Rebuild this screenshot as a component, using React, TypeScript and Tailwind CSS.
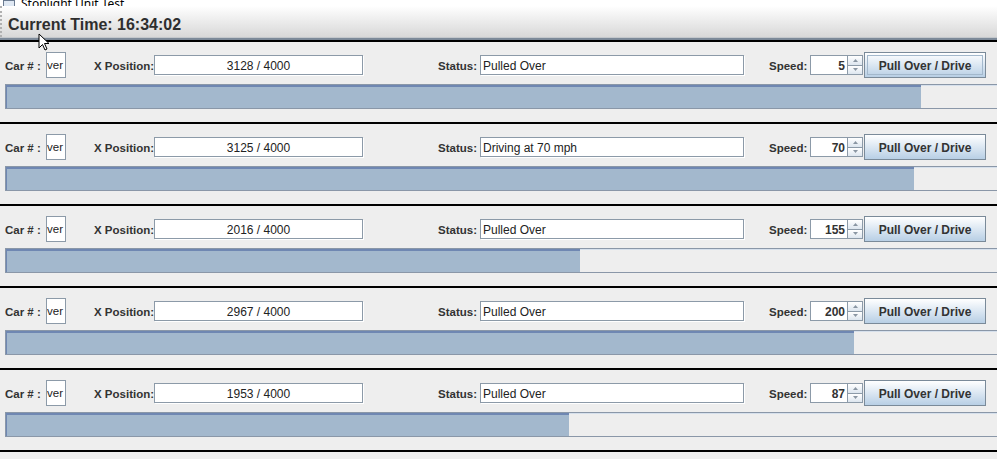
import React from "react";

type Car = { pos: string; status: string; speed: string; fill: number; focus?: boolean };

const cars: Car[] = [
  { pos: "3128 / 4000", status: "Pulled Over", speed: "5", fill: 916, focus: true },
  { pos: "3125 / 4000", status: "Driving at 70 mph", speed: "70", fill: 909 },
  { pos: "2016 / 4000", status: "Pulled Over", speed: "155", fill: 575 },
  { pos: "2967 / 4000", status: "Pulled Over", speed: "200", fill: 849 },
  { pos: "1953 / 4000", status: "Pulled Over", speed: "87", fill: 564 },
];

const font = { fontFamily: '"Liberation Sans", Arial, sans-serif' };

function Row({ car }: { car: Car }) {
  return (
    <div className="border-t-2 border-black pt-[10px] pb-[13px] overflow-hidden">
      <div className="flex items-center h-[26px] pl-[5px] text-[11.5px] text-[#333333]">
        <div className="w-[41px] font-bold whitespace-nowrap pt-[3px]">Car # :</div>
        <div className="w-[20px] h-[26px] bg-white border border-[#8c9aa8] flex justify-end items-center overflow-hidden pr-[2px] pt-[2px] text-[11.5px] text-[#222]">
          <span className="whitespace-nowrap">ver</span>
        </div>
        <div className="ml-[28px] w-[60px] font-bold whitespace-nowrap pt-[3px]">X Position:</div>
        <div className="w-[209px] h-[20px] bg-white border border-[#8c9aa8] shadow-[1px_1px_0_#ffffff] flex items-center justify-center pt-[1px] text-[12px] text-[#222]">
          {car.pos}
        </div>
        <div className="ml-[75px] w-[42px] font-bold pt-[3px]">Status:</div>
        <div className="w-[264px] h-[20px] bg-white border border-[#8c9aa8] shadow-[1px_1px_0_#ffffff] flex items-center pl-[2px] pt-[1px] text-[12px] text-[#222]">
          {car.status}
        </div>
        <div className="ml-[25px] w-[41px] font-bold pt-[3px]">Speed:</div>
        <div className="flex h-[20px]">
          <div className="w-[37px] h-[20px] bg-white border border-[#8c9aa8] border-r-0 flex items-center justify-end pr-[2px] pt-[1px] text-[12px] font-bold text-[#333]">
            {car.speed}
          </div>
          <div className="w-[16px] h-[20px] flex flex-col border border-[#8c9aa8]">
            <div className="flex-1 bg-gradient-to-b from-white to-[#dde6ef] border-b border-[#8c9aa8] flex items-center justify-center">
              <svg width="5" height="3" viewBox="0 0 5 3"><path d="M2.5 0 L5 3 L0 3 Z" fill="#8a96a3" /></svg>
            </div>
            <div className="flex-1 bg-gradient-to-b from-white to-[#dde6ef] flex items-center justify-center">
              <svg width="5" height="3" viewBox="0 0 5 3"><path d="M0 0 L5 0 L2.5 3 Z" fill="#8a96a3" /></svg>
            </div>
          </div>
        </div>
        <div className="ml-[1px] w-[122px] h-[26px] border border-[#7a8a99] bg-gradient-to-b from-white to-[#b8cfe5] flex items-center justify-center p-[2px]">
          <div
            className={
              "w-full h-full flex items-center justify-center pt-[1px] font-bold text-[12px] text-[#333333] " +
              (car.focus ? "border border-[#a3b8cc]" : "border border-transparent")
            }
          >
            Pull Over / Drive
          </div>
        </div>
      </div>
      <div className="mt-[6px] ml-[5px] w-[1200px] h-[25px] bg-[#eeeeee] border border-[#8a97a8] flex">
        <div className="h-full bg-[#a3b8cd] border-t-2 border-l border-[#6f87b2]" style={{ width: car.fill - 1 }} />
        <div className="flex-1 h-full border-t border-[#d6e0ec]" />
      </div>
    </div>
  );
}

export default function App() {
  return (
    <div className="w-[997px] h-[459px] bg-[#eeeeee] overflow-hidden relative" style={font}>
      <div className="h-[6px] bg-white overflow-hidden flex items-end">
        <div className="flex items-end gap-[6px] pl-[3px] -mb-[4px]">
          <div className="w-[12px] h-[10px] border border-[#6a7a90] bg-[#dfe8f3]" />
          <span className="text-[12px] text-black leading-[12px]" style={{ fontFamily: '"Noto Sans", sans-serif' }}>
            Stoplight Unit Test
          </span>
        </div>
      </div>
      <div className="h-[31px] bg-gradient-to-b from-white to-[#d8d8d8] flex items-center pl-[6px] border-l-2 border-dotted border-[#b0b0b0]">
        <span className="text-[16px] font-bold text-[#2e2e2e] pt-[6px]">Current Time: 16:34:02</span>
      </div>
      <div className="h-[1px] bg-[#c4c8cc]" />
      <div className="h-[2px] bg-[#7d8a99]" />
      {cars.map((c, i) => (
        <Row key={i} car={c} />
      ))}
      <div className="border-t-2 border-black" />
      <svg className="absolute left-[38px] top-[33px]" width="13" height="19" viewBox="0 0 13 19">
        <path d="M1 1 L1 15 L4.5 11.5 L7 17 L9 16 L6.5 10.5 L11 10.5 Z" fill="white" stroke="black" strokeWidth="1" strokeLinejoin="round" />
      </svg>
    </div>
  );
}
